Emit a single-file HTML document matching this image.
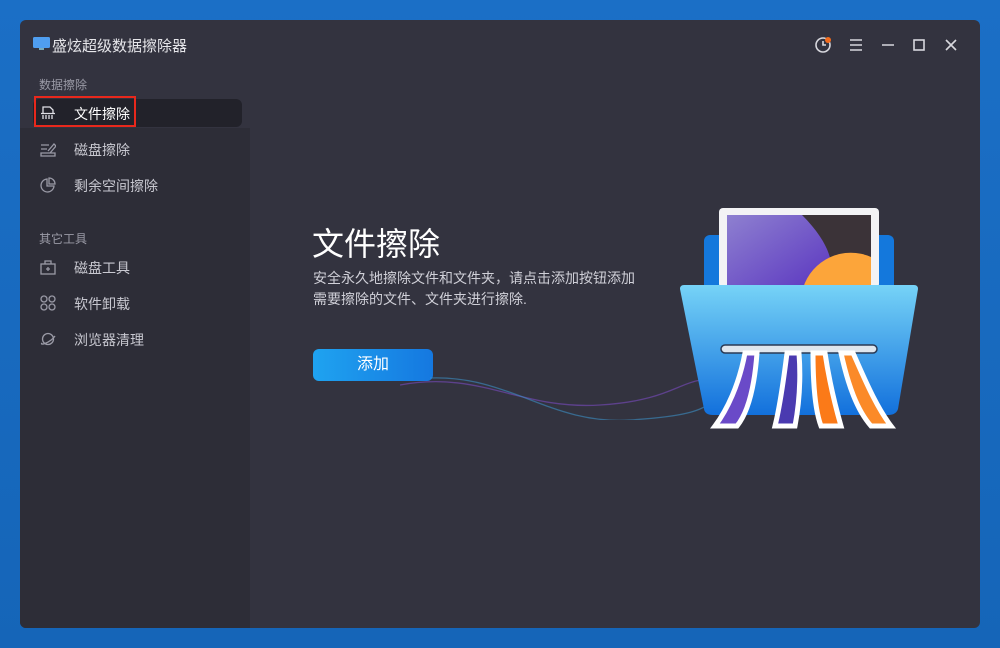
<!DOCTYPE html>
<html><head><meta charset="utf-8"><style>
*{margin:0;padding:0;box-sizing:border-box}
body{width:1000px;height:648px;overflow:hidden;background:linear-gradient(180deg,#1b6fc6,#1565b8);font-family:"Liberation Sans","Noto Sans CJK SC",sans-serif;position:relative}
.win{position:absolute;left:20px;top:20px;width:960px;height:608px;background:#33333f;border-radius:6px;overflow:hidden}
.side{position:absolute;left:0;top:108px;width:230px;height:500px;background:#2d2d37}
.t{position:absolute;white-space:nowrap}
.title{left:32px;top:15px;font-size:15px;color:#e6e6ea}
.sec{font-size:12px;color:#9a9aa6;left:19px}
.item{font-size:14px;color:#c8c8d0;left:54px}
.ic{position:absolute;left:20px}
.sel{position:absolute;left:13px;top:79px;width:209px;height:28px;background:#22222a;border-radius:6px}
.red{position:absolute;left:14px;top:76px;width:102px;height:31px;border:2px solid #e8281c}
</style></head><body>
<div class="win">
<div class="side"></div>
<svg style="position:absolute;left:13px;top:16px" width="17" height="15"><rect x="0" y="1" width="17" height="11" rx="1.5" fill="#4f9ef0"/><rect x="6" y="12" width="5" height="2" fill="#7ab"/></svg>
<div class="t title">盛炫超级数据擦除器</div>
<svg style="position:absolute;left:795px;top:16px" width="150" height="18" fill="none" stroke="#d8d8de" stroke-width="1.6">
<circle cx="8" cy="9" r="7"/><path d="M8 5v4h3"/><circle cx="13" cy="4" r="3" fill="#f26b1d" stroke="none"/>
<path d="M35 4h12M35 9h12M35 14h12"/><path d="M67 9h12"/><rect x="99" y="4" width="10" height="10"/><path d="M131 4l10 10M141 4l-10 10"/></svg>
<div class="t sec" style="top:56px">数据擦除</div>
<div class="sel"></div><div class="red"></div>
<svg class="ic" style="top:86px" width="16" height="14" fill="none" stroke="#e0e0e6" stroke-width="1.3"><path d="M3 7V1h7l3 3v3M1 7.5h14M3 9v4M6 9v4M9 9v4M12 9v4"/></svg>
<div class="t item" style="top:84px;color:#fff">文件擦除</div>
<svg class="ic" style="top:122px" width="16" height="15" fill="none" stroke="#9a9aa6" stroke-width="1.3"><path d="M1 3h8M1 7h6M1 11h14v3H1zM8 9l6-7 2 2-6 7"/></svg>
<div class="t item" style="top:120px">磁盘擦除</div>
<svg class="ic" style="top:157px" width="16" height="16" fill="none" stroke="#9a9aa6" stroke-width="1.3"><path d="M7 2A6.5 6.5 0 1 0 14 9H7z M9 1v6h6A6 6 0 0 0 9 1z"/></svg>
<div class="t item" style="top:156px">剩余空间擦除</div>
<div class="t sec" style="top:210px">其它工具</div>
<svg class="ic" style="top:240px" width="16" height="15" fill="none" stroke="#9a9aa6" stroke-width="1.3"><rect x="1" y="4" width="14" height="10"/><path d="M5 4V1h6v3M8 7v4M6 9h4"/></svg>
<div class="t item" style="top:238px">磁盘工具</div>
<svg class="ic" style="top:275px" width="16" height="16" fill="none" stroke="#9a9aa6" stroke-width="1.3"><circle cx="4" cy="4" r="3"/><circle cx="12" cy="4" r="3"/><circle cx="4" cy="12" r="3"/><circle cx="12" cy="12" r="3"/></svg>
<div class="t item" style="top:274px">软件卸载</div>
<svg class="ic" style="top:311px" width="17" height="15" fill="none" stroke="#9a9aa6" stroke-width="1.3"><circle cx="8" cy="8" r="5.5"/><path d="M2 12c-3 3 8 0 13-7"/></svg>
<div class="t item" style="top:310px">浏览器清理</div>

<div class="t" style="left:292px;top:199px;font-size:32px;color:#fff">文件擦除</div>
<div class="t" style="left:293px;top:248px;font-size:14px;color:#d0d0d8;line-height:21px">安全永久地擦除文件和文件夹，请点击添加按钮添加<br>需要擦除的文件、文件夹进行擦除.</div>
<div style="position:absolute;left:293px;top:329px;width:120px;height:32px;border-radius:6px;background:linear-gradient(90deg,#1fa3f0,#1578e0);color:#fff;font-size:16px;text-align:center;line-height:32px">添加</div>
<svg style="position:absolute;left:380px;top:330px" width="320" height="70" fill="none"><path d="M0 35C80 20 120 60 200 55S280 25 320 30" stroke="#7a4bc0" stroke-width="1.3" opacity=".6"/><path d="M30 28C110 25 150 75 230 70S300 55 320 50" stroke="#3c8fc4" stroke-width="1.3" opacity=".6"/></svg>

<svg style="position:absolute;left:655px;top:185px" width="250" height="230">
<defs><linearGradient id="f" x1="0" y1="0" x2="0" y2="1"><stop offset="0" stop-color="#76d3f7"/><stop offset="1" stop-color="#1270dc"/></linearGradient>
<linearGradient id="p" x1="0" y1="0" x2="1" y2="1"><stop offset="0" stop-color="#8e80d0"/><stop offset="1" stop-color="#5a35c0"/></linearGradient></defs>
<rect x="29" y="30" width="190" height="60" rx="6" fill="#1478dc"/>
<rect x="44" y="3" width="160" height="80" rx="4" fill="#f3f3f5"/>
<rect x="52" y="10" width="144" height="73" fill="#3b3338"/>
<path d="M52 10h75c30 30 35 55 25 73H52z" fill="url(#p)"/>
<path d="M128 83A50 50 0 0 1 196 52V83z" fill="#fca53a"/>
<path d="M5 84Q5 80 9 80H239Q243 80 243 84L223 204Q221 210 213 210H38Q30 210 29 204Z" fill="url(#f)"/>
<rect x="46" y="140" width="156" height="8" rx="4" fill="#dfe6ee" stroke="#2a3a55" stroke-width="1.5"/>
<path d="M70 148C64 180 52 205 40 221H62C75 205 80 175 82 148Z" fill="#6a4ac8" stroke="#fff" stroke-width="5"/>
<path d="M112 148C108 180 104 205 100 221H120C124 200 126 175 124 148Z" fill="#4a3ab0" stroke="#fff" stroke-width="5"/>
<path d="M138 148C138 180 140 205 146 221H166C160 200 154 175 150 148Z" fill="#fb7a18" stroke="#fff" stroke-width="5"/>
<path d="M166 148C173 180 182 205 196 221H216C200 200 188 170 178 148Z" fill="#fb8a28" stroke="#fff" stroke-width="5"/>
</svg>
</div>
</body></html>
